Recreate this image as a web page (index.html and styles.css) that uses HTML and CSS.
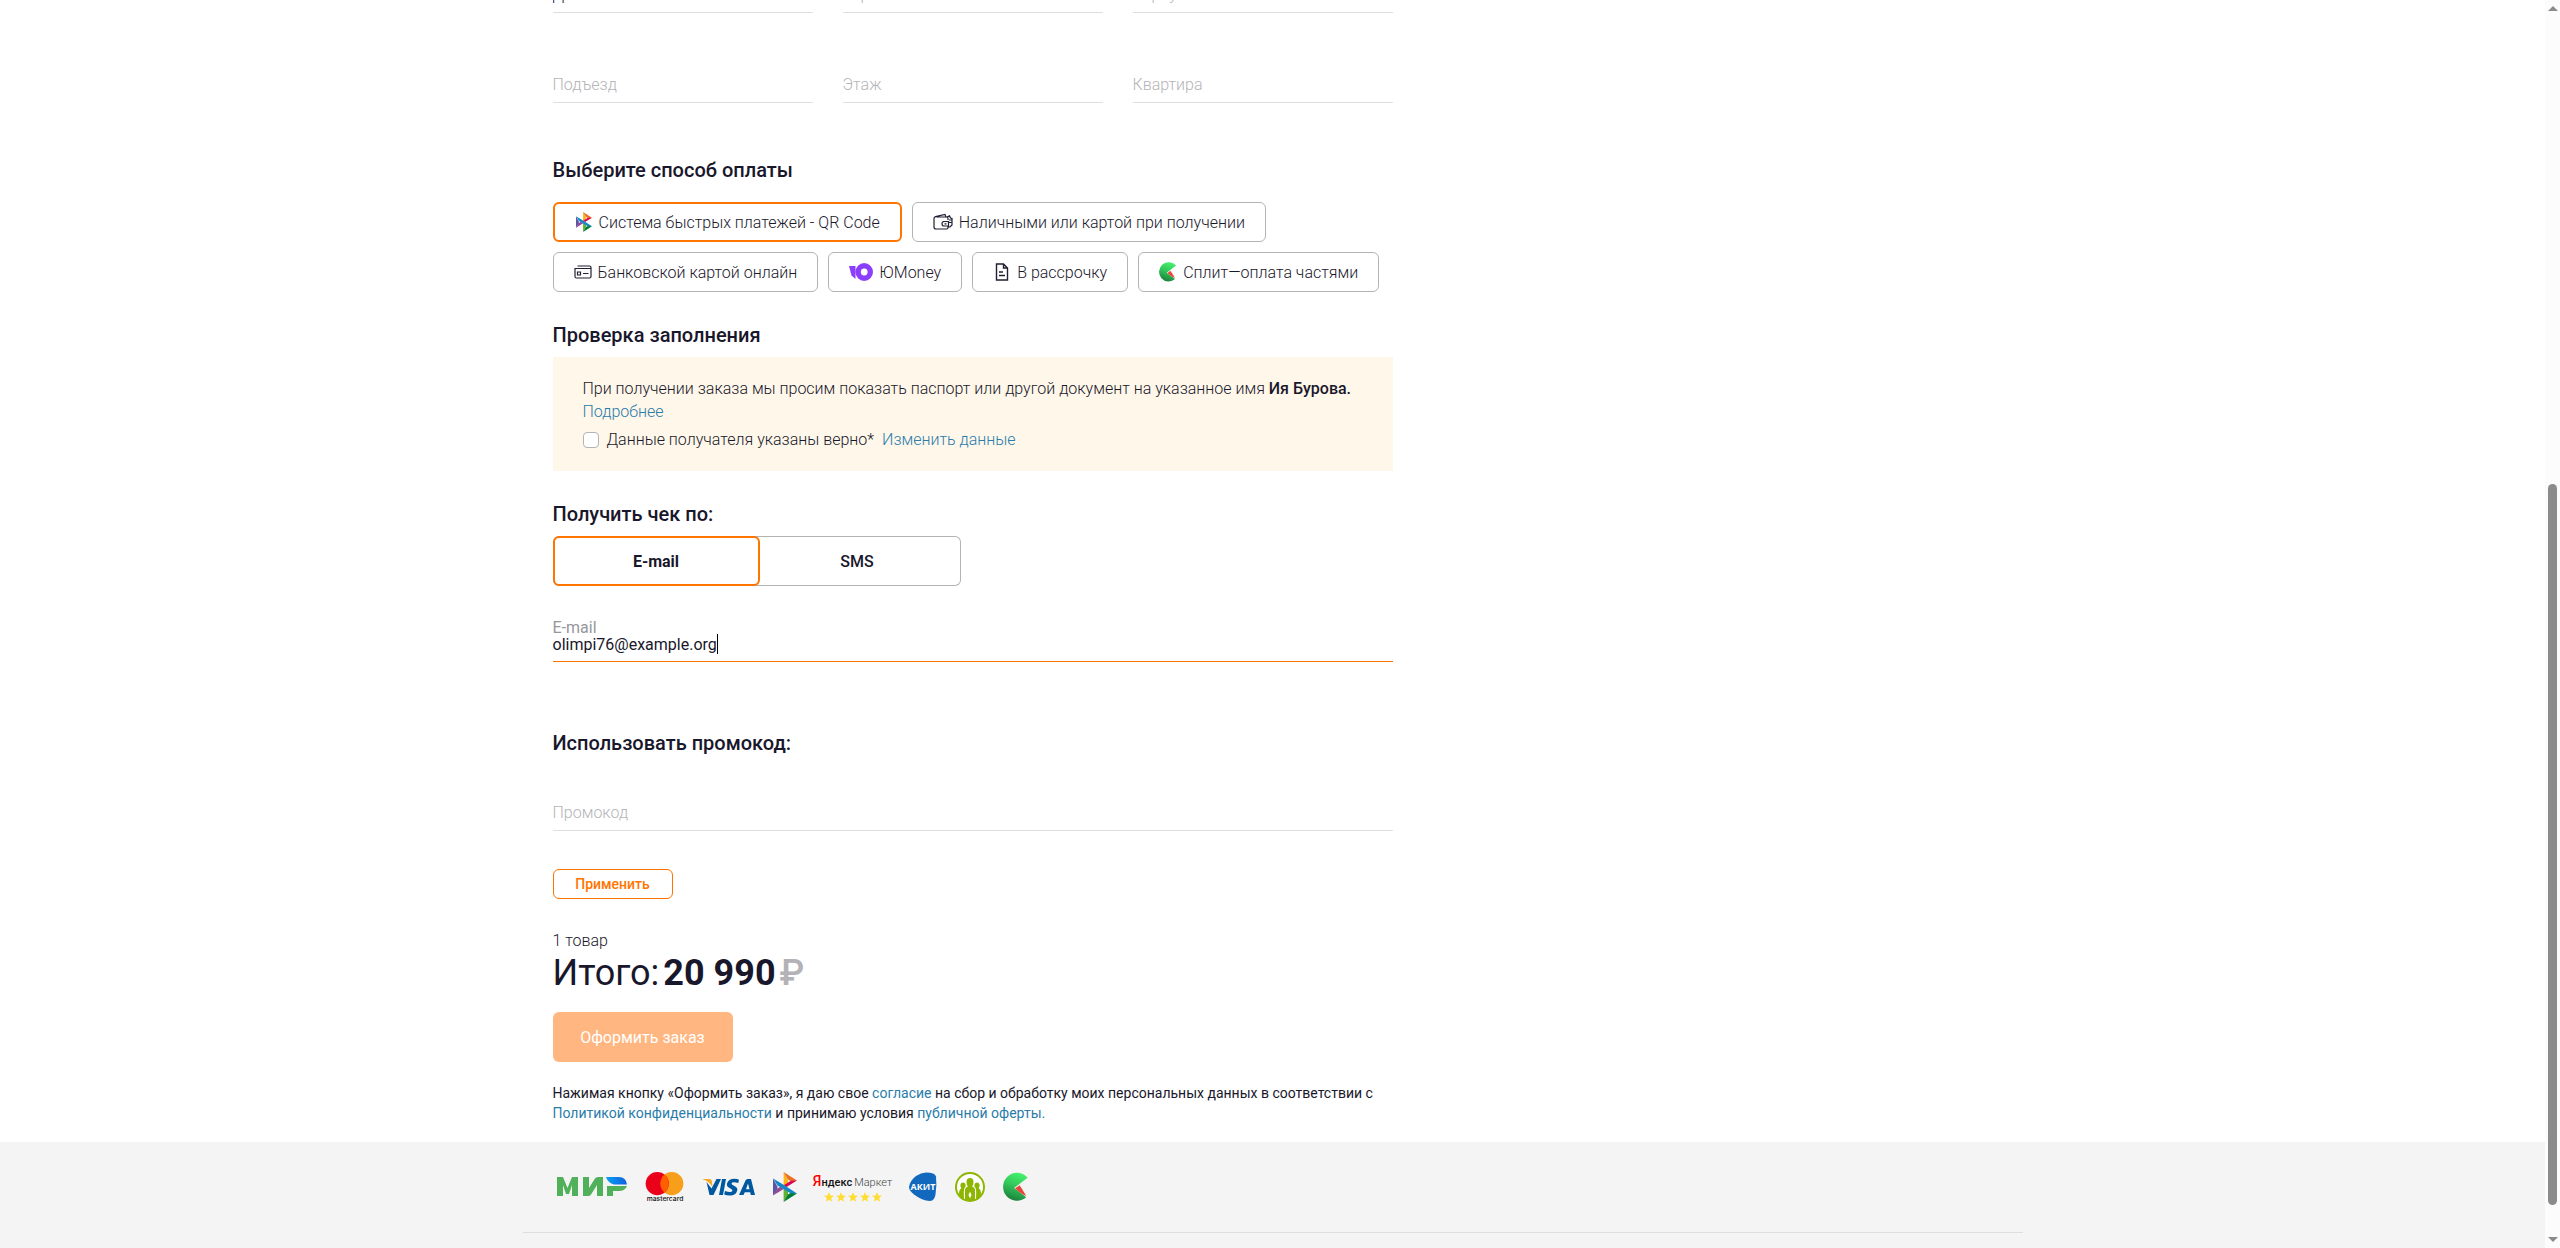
FILE: index.html
```html
<!DOCTYPE html>
<html lang="ru">
<head>
<meta charset="utf-8">
<title>Оформление заказа</title>
<link rel="stylesheet" href="styles.css">
</head>
<body>
<svg class="sprite" aria-hidden="true">
  <defs>
    <linearGradient id="melon" x1="0.6" y1="0" x2="0.3" y2="1"><stop offset="0" stop-color="#45f06c"/><stop offset="0.45" stop-color="#32c75a"/><stop offset="1" stop-color="#1a7c3a"/></linearGradient>
    <linearGradient id="mirBlue" x1="0" x2="1"><stop offset="0" stop-color="#0aa0f0"/><stop offset="1" stop-color="#0f5fe0"/></linearGradient>
    <symbol id="sbp" viewBox="0 0 24 30">
      <path fill="#5b57a2" d="M0 6.500 4.400 14.600V17.400L0 23.500z"/>
      <path fill="#984995" d="M0 23.500 10.700 17 7.200 14.800 4.400 16.500z"/>
      <path fill="#fab718" d="M10.600 0 15 8.200V11L10.600 13.500z"/>
      <path fill="#ed6f26" d="M10.600 0 24 8.600 18.500 9.500 14.800 7.600z"/>
      <path fill="#d90751" d="M24 8.600 13.500 15 10.600 13.200 18 8.800z"/>
      <path fill="#63b22f" d="M10.600 16.500 15 19V22.500L10.600 30z"/>
      <path fill="#017f36" d="M10.600 30 14.800 22.500 18.500 20.500 24 21.500z"/>
      <path fill="#1487c9" d="M0 6.500 10.600 12.800 24 21.500 17.500 21.200 4.500 13.500z"/>
    </symbol>
    <symbol id="split" viewBox="0 0 28 30">
      <path fill="url(#melon)" d="M26.500 5A15 15 0 1 0 25 26L12 16z"/>
      <path fill="#e9443c" d="M13 16.500 18 13 25 24.500Q21 23.500 13 16.500z"/>
      <path fill="none" stroke="#e7f6dd" stroke-width="1" d="M18 13Q25 19 25.500 25.500"/>
    </symbol>
    <symbol id="wallet" viewBox="0 0 20 18">
      <g fill="none" stroke="#201f33" stroke-width="1.200">
        <path d="M3.500 4H13.500Q15 4 15 5.500V7M15 13V14.500Q15 16 13.500 16H3Q1 16 1 14V5.500Q1 4 2.500 3.600L12 1.500 13 4"/>
        <path d="M10 8.500H15.500V13H11Q9 13 9 10.800 9 8.500 11 8.500zM11.500 10.800H13.500M14 4 16.500 2.800 17.500 5 19 5.500V12L17 14 15 14M16 7H19M16 9.500H19"/>
      </g>
    </symbol>
    <symbol id="card" viewBox="0 0 18 14">
      <g fill="none" stroke="#201f33" stroke-width="1.200"><path d="M3.500 1H15.500Q17 1 17 2.500V11.500Q17 13 15.500 13H2.500Q1 13 1 11.500V3.500H17M9 8.500H14.500"/><path d="M3.500 7H6.500V10H3.500z"/></g>
    </symbol>
    <symbol id="doc" viewBox="0 0 14 18">
      <g fill="none" stroke="#201f33" stroke-width="1.400"><path d="M1.500 1H8.500L12.500 5V17H1.500zM8.500 1V5H12.500M4 9H8M4 12.500H10"/></g>
    </symbol>
    <symbol id="yoomoney" viewBox="0 0 24 18">
      <path fill="#8b3ffd" fill-rule="evenodd" d="M15.200 0A8.800 9 0 1 0 15.200 18A8.800 9 0 1 0 15.200 0zM15.200 5.600A3.400 3.400 0 1 1 15.200 12.400A3.400 3.400 0 1 1 15.200 5.600z"/>
      <path fill="#8b3ffd" d="M0 3H6.500V16L2.500 12.500z"/>
    </symbol>
    <symbol id="star" viewBox="0 0 10 10">
      <path fill="#ffdc30" d="M5 0 6.300 3.500 10 3.700 7.100 6.100 8.100 9.800 5 7.700 1.900 9.800 2.900 6.100 0 3.700 3.700 3.500z"/>
    </symbol>
  </defs>
</svg>

<div class="page">
  <main class="container">
    <form class="checkout">
      <div class="address">
        <input class="field" type="text" aria-label="Дом" value="Д">
        <input class="field" type="text" aria-label="Строение" placeholder="Строение">
        <input class="field" type="text" aria-label="Корпус" placeholder="Корпус">
        <input class="field" type="text" aria-label="Подъезд" placeholder="Подъезд">
        <input class="field" type="text" aria-label="Этаж" placeholder="Этаж">
        <input class="field" type="text" aria-label="Квартира" placeholder="Квартира">
      </div>

      <section class="payment">
        <h2 class="title">Выберите способ оплаты</h2>
        <div class="methods">
          <button type="button" class="method method--active"><svg class="ico ico--sbp"><use href="#sbp"/></svg>Система быстрых платежей - QR Code</button>
          <button type="button" class="method"><svg class="ico ico--wallet"><use href="#wallet"/></svg>Наличными или картой при получении</button>
          <button type="button" class="method"><svg class="ico ico--card"><use href="#card"/></svg>Банковской картой онлайн</button>
          <button type="button" class="method"><svg class="ico ico--yoo"><use href="#yoomoney"/></svg>ЮMoney</button>
          <button type="button" class="method"><svg class="ico ico--doc"><use href="#doc"/></svg>В рассрочку</button>
          <button type="button" class="method"><svg class="ico ico--split"><use href="#split"/></svg>Сплит—оплата частями</button>
        </div>
      </section>

      <section class="check">
        <h2 class="title">Проверка заполнения</h2>
        <div class="notice">
          <p class="notice__text">При получении заказа мы просим показать паспорт или другой документ на указанное имя <b>Ия Бурова.</b></p>
          <a class="notice__more" href="#">Подробнее</a>
          <div class="confirm">
            <input class="confirm__box" type="checkbox" id="confirm">
            <label for="confirm">Данные получателя указаны верно*</label>
            <a class="confirm__edit" href="#">Изменить данные</a>
          </div>
        </div>
      </section>

      <section class="receipt">
        <h2 class="title">Получить чек по:</h2>
        <div class="tabs">
          <button type="button" class="tab tab--active">E-mail</button>
          <button type="button" class="tab">SMS</button>
        </div>
        <div class="email">
          <label class="email__label" for="email">E-mail</label>
          <div class="email__row">
            <input class="email__input" id="email" type="text" value="olimpi76@example.org">
            <span class="caret"></span>
          </div>
        </div>
      </section>

      <section class="promo">
        <h2 class="title">Использовать промокод:</h2>
        <input class="field" type="text" aria-label="Промокод" placeholder="Промокод">
        <button type="button" class="apply">Применить</button>
      </section>

      <section class="total">
        <p class="total__count">1 товар</p>
        <p class="total__sum"><span>Итого:</span><b>20 990</b><span class="rub">₽</span></p>
        <button type="submit" class="order">Оформить заказ</button>
        <p class="legal">Нажимая кнопку «Оформить заказ», я даю свое <a href="#">согласие</a> на сбор и обработку моих персональных данных в соответствии с <a href="#">Политикой конфиденциальности</a> и принимаю условия <a href="#">публичной оферты.</a></p>
      </section>
    </form>
  </main>

  <footer class="footer">
    <div class="partners">
      <svg class="logo logo--mir" viewBox="0 0 70 20">
        <path fill="#51b05a" d="M0 19V0H6L10.500 11 15 0H21V19H15V8L12 17H9L6 8V19zM26 19V0H32V11L38 1.500Q39 0 41 0H46V19H40V8L34 17.500Q33 19 31 19zM50 9H70Q68 14 62 14H56V19H50z"/>
        <path fill="url(#mirBlue)" d="M49 0H62Q69 0 70 7.500H57Q51 6 49 0z"/>
      </svg>
      <svg class="logo logo--mc" viewBox="0 0 40 31">
        <circle cx="27" cy="12" r="12" fill="#f79f1a"/><circle cx="12" cy="12" r="12" fill="#eb001b"/>
        <path fill="#ff5f00" d="M19.500 2.700A12 12 0 0 1 19.500 21.300 12 12 0 0 1 19.500 2.700z"/>
        <text x="20" y="30" text-anchor="middle" class="mc-text">mastercard</text>
      </svg>
      <svg class="logo logo--visa" viewBox="0 0 52 17">
        <path fill="#0058a0" d="M18 .5 10.500 16.500H6.500L3.500 3.500 8.500 10 13.500 .5zM23 .5 20 16.500H16L19 .5zM36 1.200 35.300 4.400Q29 2.800 28.500 5 28.500 6.200 31.500 7.500 35 9.200 34.200 12 33 17 27 17 23.500 17 21.200 16L22 12.500Q28.500 14.500 29.500 12.200 29.500 11 27 9.800 23.200 8 24 5 25.300 .3 31.500 .3 34 .3 36 1.200zM48 .5 52 16.500H47.800L47.200 13.700H41.800L40.500 16.500H36L42.500 2Q43.200 .5 44.500 .5zM45 5 43 10.800H46.500z"/>
        <path fill="#f7a823" d="M0 .5H6.500Q8.500 .5 8.800 2.500L9.500 8.500Q6 2.500 0 1z"/>
      </svg>
      <svg class="logo logo--sbp"><use href="#sbp"/></svg>
      <div class="logo market">
        <span class="market__name"><b><i>Я</i>ндекс</b>Маркет</span>
        <span class="market__stars">
          <svg><use href="#star"/></svg><svg><use href="#star"/></svg><svg><use href="#star"/></svg><svg><use href="#star"/></svg><svg><use href="#star"/></svg>
        </span>
      </div>
      <svg class="logo logo--akit" viewBox="0 0 28 29">
        <path fill="#1268bd" d="M17 0Q26 0 27 4 28 12 26.500 22 25.500 28 21 28.500 13 28 5 22 0 18 0 14.500 1 8 7 3.500 12 0 17 0z"/>
        <text x="14" y="17" text-anchor="middle" class="akit-text">АКИТ</text>
      </svg>
      <svg class="logo logo--people" viewBox="0 0 30 30">
        <circle cx="15" cy="15" r="15" fill="#8db600"/><circle cx="15" cy="15" r="13" fill="#fff"/>
        <path fill="#8db600" d="M15 6a3.500 4 0 0 1 3.500 4Q18.500 13 17 14.500 20 15.500 20 18V28H10V18Q10 15.500 13 14.500 11.500 13 11.500 10A3.500 4 0 0 1 15 6zM8 10.500a2.600 3 0 0 1 1.500 5.500Q8.500 17 9 28L5 25Q3 21 5 17.500L6.500 16A2.600 3 0 0 1 8 10.500zM22 10.500a2.600 3 0 0 1 1.500 5.500L25 17.500Q27 21 25 25L21 28Q21.500 17 20.500 16A2.600 3 0 0 1 22 10.500z"/>
        <path fill="#fff" d="M15 19.500 16.500 23 15 26.500 13.500 23z"/>
      </svg>
      <svg class="logo logo--split"><use href="#split"/></svg>
    </div>
  </footer>
</div>
<div class="scrollbar"><span class="arrow arrow--up"></span><span class="thumb"></span><span class="arrow arrow--down"></span></div>
</body>
</html>
```
FILE: styles.css
```css
*{box-sizing:border-box}

body{
  margin:0;
  height:100vh;
  display:flex;
  overflow:hidden;
  background:#fff;
  color:#19172b;
  font:300 16px/23px Roboto,"Liberation Sans",sans-serif;
}
h2,p{margin:0}
a{color:#2a7caa;text-decoration:none}
button,input{font:inherit;color:inherit}
button{background:#fff;border:1px solid #b3b3b3;border-radius:6px;padding:0}
.sprite{position:absolute;width:0;height:0}

.page{
  flex:1;
  min-width:0;
  display:flex;
  flex-direction:column;
  overflow:hidden;
}
.container,.partners{
  width:100%;
  max-width:1500px;
  margin:0 auto;
  padding:0 30px;
}
.checkout{max-width:840px}

/* address fields, scrolled partly out of view */
.address{
  display:grid;
  grid-template-columns:repeat(3,1fr);
  gap:50px 30px;
  margin-top:-27px;
}
.field{
  display:block;
  width:100%;
  height:40px;
  border:0;
  border-bottom:1px solid #dedede;
  padding:4px 0 0;
  outline:0;
  background:none;
}
.field::placeholder{color:#b4b4b7;opacity:1}

.title{font-weight:500;font-size:20px;line-height:24px}

.payment{margin-top:55px}
.methods{display:flex;flex-wrap:wrap;gap:10px;margin-top:20px}
.method{
  display:flex;
  align-items:center;
  height:40px;
  padding:0 20px;
}
.method--active{border:2px solid #ff7500}
.ico{flex:none;margin-right:6px}
.ico--sbp{width:18px;height:20px}
.ico--wallet{width:20px;height:18px}
.ico--card{width:18px;height:14px}
.ico--yoo{width:24px;height:18px}
.ico--doc{width:18px;height:18px}
.ico--split{width:18px;height:20px}

.check{margin-top:31px}
.notice{
  margin-top:10px;
  padding:20px 30px;
  background:#fff7ea;
  min-height:114px;
}
.notice b{font-weight:500}
.notice__more{display:block;width:max-content}
.confirm{display:flex;align-items:center;margin-top:5px}
.confirm__box{
  appearance:none;
  width:16px;
  height:16px;
  margin:0 8px 0 0;
  border:1px solid #b3b3b3;
  border-radius:4px;
  background:#fff;
}
.confirm__edit{margin-left:8px}

.receipt{margin-top:31px}
.tabs{
  display:flex;
  width:408px;
  height:50px;
  margin-top:10px;
  border-radius:6px;
  box-shadow:inset 0 0 0 1px #b3b3b3;
}
.tab{width:201px;padding-right:6px;border-color:transparent;background:none;font-weight:500}
.tab--active{width:207px;padding:0;border:2px solid #ff7500;font-weight:700}

.email{margin-top:34px;border-bottom:1px solid #ff7500;padding-bottom:9px;font-weight:400}
.email__label{display:block;line-height:16px;color:#97979b}
.email__row{display:flex;align-items:center;height:16px}
.email__input{
  field-sizing:content;
  height:20px;
  padding:0;
  border:0;
  outline:0;
  background:none;
}
.caret{width:1px;height:20px;background:#000}

.promo{margin-top:69px}
.promo .field{margin-top:36px}
.apply{
  display:block;
  width:120px;
  height:30px;
  margin-top:38px;
  border-color:#ff7500;
  color:#ff7500;
  font-size:14px;
  font-weight:500;
}

.total{margin-top:32px}
.total__count{line-height:20px}
.total__sum{display:flex;gap:4px;font-size:36px;line-height:44px;font-weight:400}
.total__sum b{font-weight:700}
.total__sum .rub{color:#b3b3b7;font-weight:500}
.order{
  display:block;
  width:180px;
  height:50px;
  margin-top:17px;
  border:0;
  background:#ffb680;
  color:#fff;
  font-weight:400;
}
.legal{margin-top:21px;font-size:14px;line-height:20px;font-weight:400}

.footer{flex:1;margin-top:19px;padding-top:30px;background:#f4f4f4}
.partners{
  display:flex;
  align-items:center;
  gap:18px;
  padding:0 34px 30px;
  border-bottom:1px solid #dedede;
}
.logo{flex:none;height:30px}
.logo--mir{width:70px}
.logo--mc{width:40px}
.logo--visa{width:52px}
.logo--sbp{width:24px}
.logo--akit{width:28px}
.logo--people{width:30px}
.logo--split{width:26px}
.mc-text{font:500 7px Inter,sans-serif;fill:#111}
.akit-text{font:700 9px "Open Sans",sans-serif;fill:#fff}
.market{width:76px;display:flex;flex-direction:column;align-items:center}
.market__name{display:flex;align-items:baseline;gap:2px;font-size:11px;line-height:18px;color:#444}
.market__name b{font-size:11px;font-weight:500;color:#111}
.market__name i{font-style:normal;font-size:14px;color:#f00}
.market__stars{display:flex;gap:2px}
.market__stars svg{width:10px;height:10px}

.scrollbar{
  flex:none;
  width:15px;
  display:flex;
  flex-direction:column;
  align-items:center;
  padding:6px 0;
  background:#fcfcfc;
}
.scrollbar::before{content:"";flex:473}
.arrow{order:-1;border:5px solid transparent;border-width:0 5px 5px;border-bottom-color:#8b8b8b}
.thumb{width:9px;flex:720;border-radius:5px;background:#8b8b8b}
.arrow--down{order:1;border-width:5px 5px 0;border-top-color:#8b8b8b}
.scrollbar::after{content:"";flex:32}
```
